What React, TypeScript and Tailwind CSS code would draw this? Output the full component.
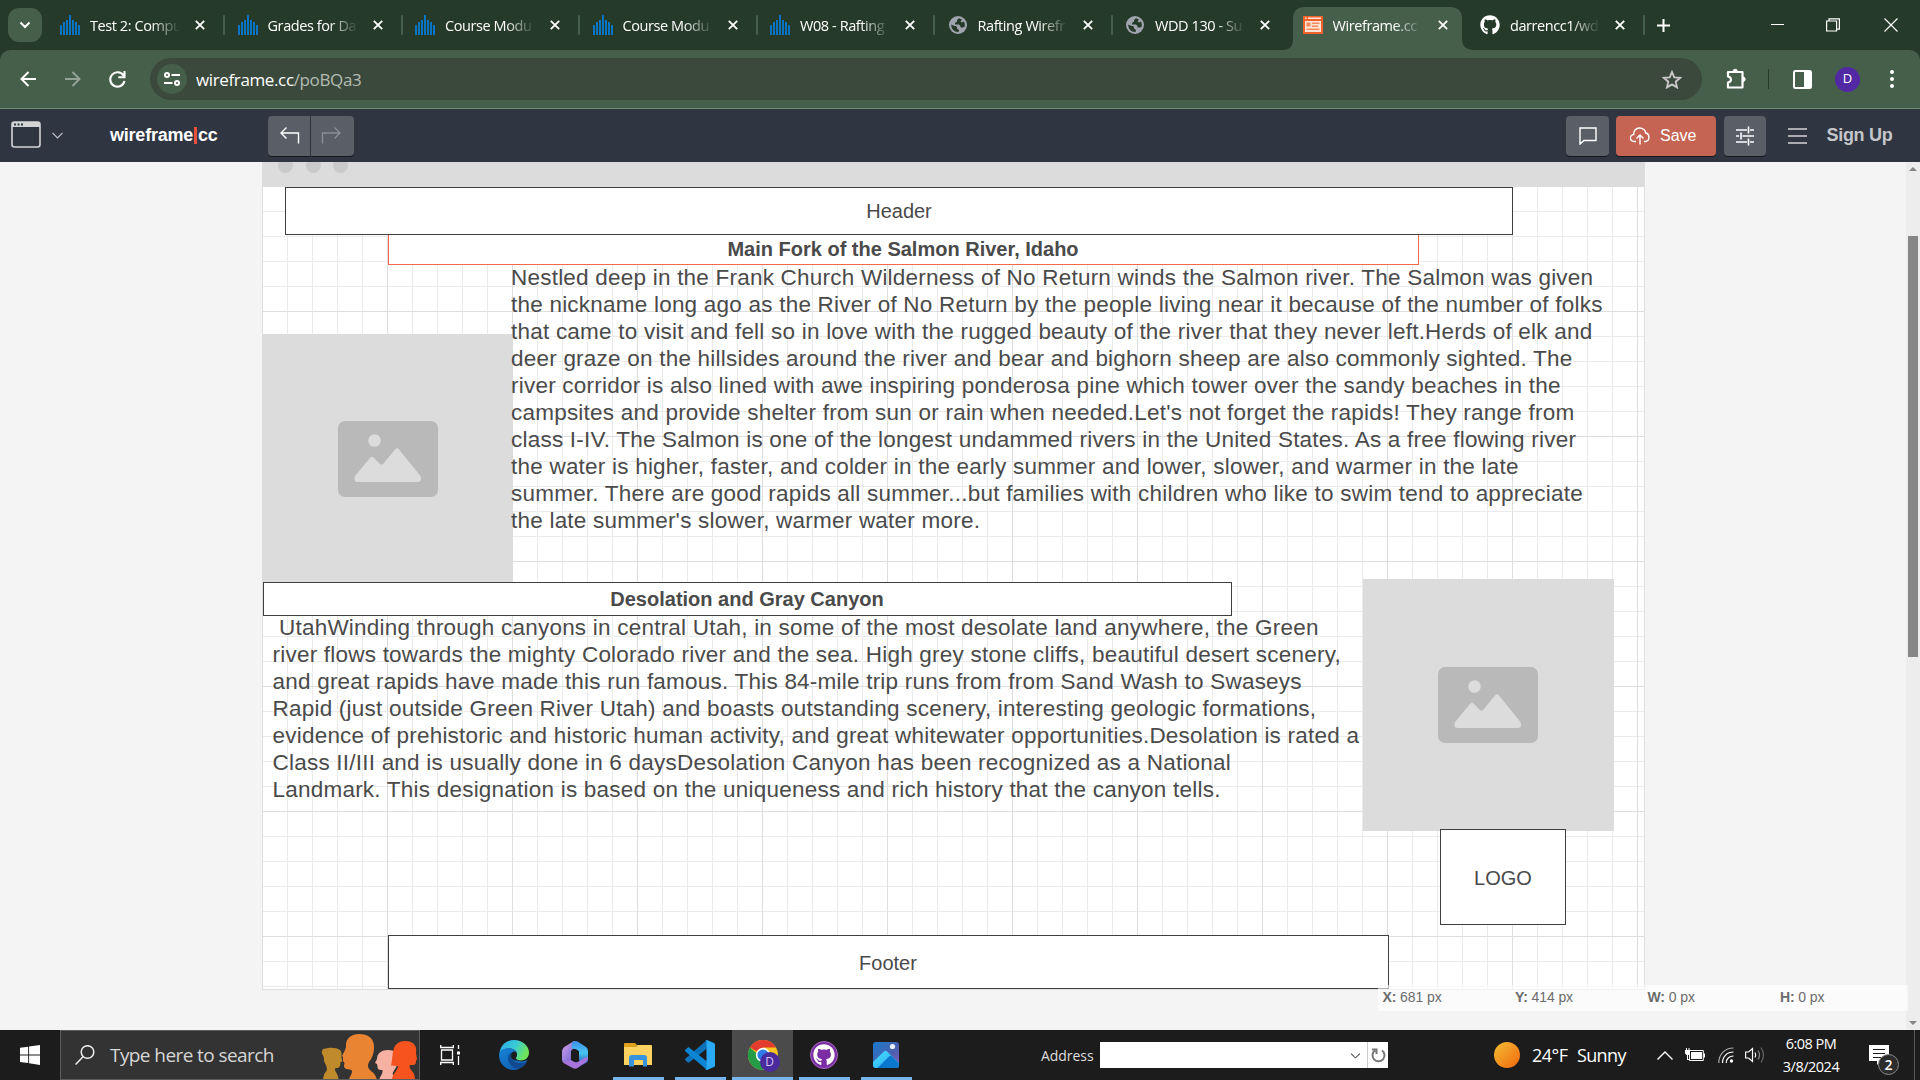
import React from "react";
import { VscChevronDown } from "react-icons/vsc";
import { FaGithub } from "react-icons/fa";

const UI = "font-['Open_Sans',sans-serif]";

const tabs = [
  { icon: "bars", title: "Test 2: Compu" },
  { icon: "bars", title: "Grades for Da" },
  { icon: "bars", title: "Course Modu" },
  { icon: "bars", title: "Course Modu" },
  { icon: "bars", title: "W08 - Rafting" },
  { icon: "globe", title: "Rafting Wirefr" },
  { icon: "globe", title: "WDD 130 - Su" },
  { icon: "wire", title: "Wireframe.cc" },
  { icon: "github", title: "darrencc1/wd" },
];

function Favicon({ kind }: { kind: string }) {
  if (kind === "bars")
    return (
      <svg width="20" height="20" viewBox="0 0 20 20" fill="#0a74c4">
        <path d="M0 10h2v10H0zM3 7h2v13H3zM6 5h2v15H6zM9 0h2v20H9zM12 5h2v15h-2zM15 7h2v13h-2zM18 10h2v10h-2z" />
      </svg>
    );
  if (kind === "globe")
    return (
      <svg width="20" height="20" viewBox="0 0 20 20">
        <circle cx="10" cy="10" r="9" fill="#9fa4ae" />
        <path d="M11 3.200 9 5v1.500L7 8v1.500h4l1.500 1.500v1.500h2l2-.5c.6-2 .3-4-.6-5.500L14 7.500l-1.500-1L14 4.500zM3.200 9.500l3.300 1.500 1.500 0 1 1.500v1l2 1.500-.5 2c-4 .3-7.500-3-7.300-7.500z" fill="#253a28" />
      </svg>
    );
  if (kind === "wire")
    return (
      <svg width="20" height="18" viewBox="0 0 20 18">
        <path d="M0 0h20v18H0z" fill="#f0622d" />
        <path d="M2 1.500h1.500v1.500H2zM5 1.500h13v1.500H5zM2 5h16v11H2z" fill="#ffe3d3" />
        <path d="M3.500 6.500h4v4h-4zM9 6.500h7.500V8H9zM9 9.500h6V11H9zM3.500 12.500h13V14h-13z" fill="#f58a5d" />
      </svg>
    );
  return <FaGithub size={20} color="#fff" />;
}

function X() {
  return (
    <svg width="10" height="10" viewBox="0 0 10 10" stroke="#fff" strokeWidth="1.800">
      <path d="M.8.8l8.400 8.400M9.200.8L.8 9.200" />
    </svg>
  );
}

function Tab({ icon, title, active, sep }: { icon: string; title: string; active: boolean; sep: boolean }) {
  return (
    <div className="relative flex h-[50px] w-[177.5px] shrink-0 items-center">
      {active && (
        <svg className="absolute -left-[20px] top-[7px]" width="191" height="43" viewBox="0 0 191 43">
          <path d="M0 43c7 0 10-4 10-11V12C10 4 14 0 22 0h145c8 0 12 4 12 12v20c0 7 4 11 12 11z" fill="#465f4a" />
        </svg>
      )}
      <div className="relative flex w-full items-center">
        <Favicon kind={icon} />
        <div className={`ml-[10px] w-[92px] overflow-hidden whitespace-nowrap pt-[1px] text-[14.5px] leading-5 tracking-[-0.42px] text-white [mask-image:linear-gradient(to_right,#000_66%,transparent_98%)] ${UI}`}>
          {title}
        </div>
        <div className="ml-[13px]">
          <X />
        </div>
        {sep && <div className="ml-[18px] h-5 w-[2px] rounded bg-[#465f4a]" />}
      </div>
    </div>
  );
}

function ChromeTabs() {
  return (
    <div className="flex h-[50px] items-center bg-[#253a28] pl-2">
      <div className="flex h-[34px] w-[34px] items-center justify-center rounded-[11px] bg-[#465f4a]">
        <svg width="12" height="8" viewBox="0 0 12 8" fill="none" stroke="#fff" strokeWidth="2">
          <path d="M1.500 1.500 6 6l4.500-4.500" />
        </svg>
      </div>
      <div className="ml-[18px] flex">
        {tabs.map((t, i) => (
          <Tab key={i} icon={t.icon} title={t.title} active={i === 7} sep={i !== 6 && i !== 7} />
        ))}
      </div>
      <svg className="-ml-px" width="13" height="13" viewBox="0 0 13 13" stroke="#fff" strokeWidth="2">
        <path d="M6.500 0v13M0 6.500h13" />
      </svg>
      <div className="ml-auto flex items-center pr-[22px]">
        <svg width="14" height="14" viewBox="0 0 14 14" stroke="#fff">
          <path d="M1 6.500h13" />
        </svg>
        <svg className="ml-[42px]" width="14" height="14" viewBox="0 0 14 14" fill="none" stroke="#fff" strokeWidth="1.200">
          <path d="M.6 3h10v10H.6zM3 3V.8h10.400v10.400H11" />
        </svg>
        <svg className="ml-[44px]" width="14" height="14" viewBox="0 0 14 14" stroke="#fff" strokeWidth="1.200">
          <path d="M.5.500l13 13M13.500.500l-13 13" />
        </svg>
      </div>
    </div>
  );
}

function AddressBar() {
  return (
    <div className="h-[59px] bg-[#253a28]">
      <div className="flex h-full items-center rounded-t-[10px] border-b border-[#6d8870] bg-[#465f4a] pl-5">
        <svg width="16" height="16" viewBox="0 0 16 16" fill="none" stroke="#fff" strokeWidth="2">
          <path d="M16 8H1.500M8.500 1 1.500 8l7 7" />
        </svg>
        <svg className="ml-[29px]" width="16" height="16" viewBox="0 0 16 16" fill="none" stroke="#93a295" strokeWidth="2">
          <path d="M0 8h14.500M7.500 1l7 7-7 7" />
        </svg>
        <svg className="ml-[28px]" width="17" height="17" viewBox="0 0 17 17" fill="none" stroke="#fff" strokeWidth="2.100">
          <path d="M14.500 4.500A7.200 7.200 0 1 0 15.500 10M15.500 0v6.200H9.300" />
        </svg>
        <div className="ml-6 flex h-[42px] w-[1552px] items-center rounded-full bg-[#3b493c] pl-[7px] pr-[20px]">
          <div className="flex h-[30px] w-[30px] items-center justify-center rounded-full bg-[#465f4a]">
            <svg width="16" height="14" viewBox="0 0 16 14" fill="none" stroke="#fff" strokeWidth="2">
              <circle cx="3" cy="3" r="2" />
              <path d="M7.500 3H16M0 11h8.500" />
              <circle cx="13" cy="11" r="2" />
            </svg>
          </div>
          <div className={`ml-[9px] pt-[2px] text-[17px] leading-6 tracking-[-0.37px] text-white ${UI}`}>
            wireframe.cc<span className="text-[#b3bcb4]">/poBQa3</span>
          </div>
          <svg className="ml-auto" width="20" height="19" viewBox="0 0 20 19" fill="none" stroke="#c9c6ca" strokeWidth="1.900">
            <path d="M10 2l2.300 5.400 5.700.5-4.300 3.800 1.300 5.700-5-3-5 3 1.300-5.700L2 7.900l5.700-.5z" />
          </svg>
        </div>
        <svg className="ml-[23px]" width="22" height="22" viewBox="0 0 22 22" fill="none" stroke="#fff" strokeWidth="2.200" strokeLinejoin="round">
          <path d="M3 4h14.500v15.500H3v-5c4-1 4-5 0-6z" />
          <path d="M8 3.500a2.200 2.200 0 0 1 4.400 0zM18 9a2.200 2.200 0 0 1 0 4.400z" fill="#fff" stroke="#fff" strokeWidth="1" />
        </svg>
        <div className="ml-[21px] h-5 w-px bg-[#253a28]" />
        <svg className="ml-[24px]" width="19" height="19" viewBox="0 0 19 19">
          <rect x="1" y="1" width="17" height="17" rx="1.500" fill="none" stroke="#fff" strokeWidth="2" />
          <path d="M11 1h7v17h-7z" fill="#fff" />
        </svg>
        <div className={`ml-[23px] flex h-[25px] w-[25px] items-center justify-center rounded-full bg-[#5229a5] text-[13px] text-white ${UI}`}>D</div>
        <svg className="ml-[30px]" width="4" height="18" viewBox="0 0 4 18" fill="#fff">
          <circle cx="2" cy="2" r="2" />
          <circle cx="2" cy="9" r="2" />
          <circle cx="2" cy="16" r="2" />
        </svg>
      </div>
    </div>
  );
}

function AppBar() {
  return (
    <div className="flex h-[53px] items-center bg-[#2f3541] pl-[11px] font-['Liberation_Sans',sans-serif]">
      <svg className="-mt-[2px]" width="30" height="27" viewBox="0 0 30 27">
        <rect x="1" y="1" width="28" height="25" rx="2.500" fill="none" stroke="#d3d4d6" strokeWidth="1.600" />
        <path d="M1 3q0-2 2-2h24q2 0 2 2v3H1z" fill="#d3d4d6" />
        <path d="M3 2.500h2v2H3zM6.500 2.500h2v2h-2zM10 2.500h2v2h-2z" fill="#2f3541" />
      </svg>
      <svg className="ml-[11px]" width="11" height="7" viewBox="0 0 11 7" fill="none" stroke="#c3c5c9" strokeWidth="1.200">
        <path d="M.5.800l5 5 5-5" />
      </svg>
      <div className="ml-[47px] flex w-[158px] items-center pb-[2px] text-[18px] font-bold leading-5 tracking-[-0.22px] text-white">
        wireframe<span className="ml-[1px] mr-[1px] mt-[2px] h-[17px] w-[3px] bg-[#e9503c]" />cc
      </div>
      <div className="flex gap-px">
        <div className="flex h-10 w-[42px] items-center justify-center rounded-l-[4px] bg-[#5a5e67] shadow-[0_1px_0_#15181d]">
          <svg className="ml-[2px]" width="20" height="17" viewBox="0 0 20 17" fill="none" stroke="#fff" strokeWidth="1.400">
            <path d="M6.500 0.500 1 6l5.500 5.500M1 6h17.500v10.500" />
          </svg>
        </div>
        <div className="flex h-10 w-[43px] items-center justify-center rounded-r-[4px] bg-[#5a5e67] shadow-[0_1px_0_#15181d]">
          <svg className="-ml-[4px]" width="20" height="17" viewBox="0 0 20 17" fill="none" stroke="#8b8e94" strokeWidth="1.400">
            <path d="M13.500 0.500 19 6l-5.500 5.500M19 6H1.500v10.500" />
          </svg>
        </div>
      </div>
      <div className="ml-auto flex items-center pr-[27px]">
        <div className="flex h-10 w-[43px] items-center justify-center rounded-[4px] bg-[#5a5e67] shadow-[0_1px_0_#15181d]">
          <svg width="18" height="18" viewBox="0 0 18 18" fill="none" stroke="#fff" strokeWidth="1.400">
            <path d="M1 1h16v12.500H5L1 17z" />
          </svg>
        </div>
        <div className="ml-[7px] flex h-10 w-[100px] items-center rounded-[4px] bg-[#c56453] pl-[14px] text-[16px] text-white shadow-[0_1px_0_#15181d]">
          <svg width="20" height="18" viewBox="0 0 20 18" fill="none" stroke="#fff" strokeWidth="1.400">
            <path d="M6 14.500H4a3.300 3.300 0 0 1-.3-7C3.500 3.500 6 1 9.500 1s6 2.500 6.200 5c4.300.8 4.300 8 0 8.500H14M10 17.500V8.500M6.500 11.500 10 8l3.500 3.500" />
          </svg>
          <span className="ml-[10px]">Save</span>
        </div>
        <div className="ml-2 flex h-10 w-[42px] items-center justify-center rounded-[4px] bg-[#5a5e67] shadow-[0_1px_0_#15181d]">
          <svg width="18" height="20" viewBox="0 0 18 20" fill="none" stroke="#fff" strokeWidth="1.600">
            <path d="M0 4h11M14 4h4M12.500 0.500v7M0 10h3M6.500 10H18M5 6.500v7M0 16h11M14 16h4M12.500 12.500v7" />
          </svg>
        </div>
        <svg className="ml-[22px]" width="19" height="16" viewBox="0 0 19 16" stroke="#d3d4d6" strokeWidth="1.600">
          <path d="M0 1h19M0 8h19M0 15h19" />
        </svg>
        <div className="ml-[19.5px] w-[66.5px] whitespace-nowrap text-[18px] font-bold tracking-[-0.3px] text-[#c5c6c9]">Sign Up</div>
      </div>
    </div>
  );
}

function Picture({ className }: { className: string }) {
  return (
    <div className={`absolute flex items-center justify-center bg-[#dcdcdc] ${className}`}>
      <svg width="100" height="76" viewBox="0 0 100 76">
        <rect width="100" height="76" rx="7" fill="#b9b9b9" />
        <g fill="#dcdcdc">
          <circle cx="36.500" cy="19.500" r="6.300" />
          <path d="M17 55 32 37q2-2.500 4 0l6 6q1.500 1 3 0L57 28.500q2-2.500 4 0L82.500 55q2 6-3 6H20q-5 0-3-6z" />
        </g>
      </svg>
    </div>
  );
}

const paragraph1 = [
  "Nestled deep in the Frank Church Wilderness of No Return winds the Salmon river. The Salmon was given",
  "the nickname long ago as the River of No Return by the people living near it because of the number of folks",
  "that came to visit and fell so in love with the rugged beauty of the river that they never left.Herds of elk and",
  "deer graze on the hillsides around the river and bear and bighorn sheep are also commonly sighted. The",
  "river corridor is also lined with awe inspiring ponderosa pine which tower over the sandy beaches in the",
  "campsites and provide shelter from sun or rain when needed.Let's not forget the rapids! They range from",
  "class I-IV. The Salmon is one of the longest undammed rivers in the United States. As a free flowing river",
  "the water is higher, faster, and colder in the early summer and lower, slower, and warmer in the late",
  "summer. There are good rapids all summer...but families with children who like to swim tend to appreciate",
  "the late summer's slower, warmer water more.",
];
const paragraph2 = [
  " UtahWinding through canyons in central Utah, in some of the most desolate land anywhere, the Green",
  "river flows towards the mighty Colorado river and the sea. High grey stone cliffs, beautiful desert scenery,",
  "and great rapids have made this run famous. This 84-mile trip runs from from Sand Wash to Swaseys",
  "Rapid (just outside Green River Utah) and boasts outstanding scenery, interesting geologic formations,",
  "evidence of prehistoric and historic human activity, and great whitewater opportunities.Desolation is rated a",
  "Class II/III and is usually done in 6 daysDesolation Canyon has been recognized as a National",
  "Landmark. This designation is based on the uniqueness and rich history that the canyon tells.",
];

function Lines({ lines, className }: { lines: string[]; className: string }) {
  return (
    <div className={`absolute whitespace-pre text-[22.5px] leading-[27px] tracking-[0.22px] ${className}`}>
      {lines.map((l) => (
        <div key={l}>{l}</div>
      ))}
    </div>
  );
}

const boxBase = "absolute flex items-center justify-center border border-[#3f3f3f] bg-white text-[20px]";

function Workspace() {
  return (
    <div className="relative flex h-[868px] overflow-hidden bg-[#f4f4f4] font-['Liberation_Sans',sans-serif] text-[#4a4a4a]">
      <div className="ml-[262px] h-[828px] w-[1383px] border-x border-b border-[#dedede] bg-white">
        <div className="flex h-[25px] gap-[12.5px] bg-[#dcdcdc] pl-[15px]">
          <div className="-mt-1 h-[15px] w-[15px] rounded-full bg-[#cacaca]" />
          <div className="-mt-1 h-[15px] w-[15px] rounded-full bg-[#cacaca]" />
          <div className="-mt-1 h-[15px] w-[15px] rounded-full bg-[#cacaca]" />
        </div>
        <div className="relative h-[802px] bg-[linear-gradient(to_right,transparent_124px,#dedede_124px),linear-gradient(to_bottom,transparent_124px,#dedede_124px),linear-gradient(to_right,transparent_24px,#ebebeb_24px),linear-gradient(to_bottom,transparent_24px,#ebebeb_24px)] bg-[size:125px_125px,125px_125px,25px_25px,25px_25px]">
          <div className="absolute left-[125px] top-[46px] flex h-[32px] w-[1031px] items-center justify-center border border-[#f4694b] bg-white pr-[1px] text-[20px] font-bold">
            Main Fork of the Salmon River, Idaho
          </div>
          <div className={`${boxBase} left-[22px] top-0 h-[48px] w-[1228px]`}>Header</div>
          <Picture className="-left-px top-[147px] h-[248px] w-[251px] pt-[1px]" />
          <Lines lines={paragraph1} className="left-[248px] top-[77px]" />
          <div className={`${boxBase} left-0 top-[395px] h-[34px] w-[969px] pr-[1px] font-bold`}>Desolation and Gray Canyon</div>
          <Lines lines={paragraph2} className="left-[9.5px] top-[427px]" />
          <Picture className="left-[1100px] top-[392px] h-[252px] w-[251px] pr-[1px]" />
          <div className={`${boxBase} left-[1177px] top-[642px] h-[96px] w-[126px] pt-[2px]`}>LOGO</div>
          <div className={`${boxBase} left-[125px] top-[748px] h-[54px] w-[1001px] pr-[1px] pt-[2px]`}>Footer</div>
        </div>
      </div>
      <div className="absolute left-[1378px] top-[823px] grid h-[26px] w-[530px] grid-cols-[132.5px_132.5px_132.5px_auto] items-center bg-white/60 pb-[2px] pl-[4.5px] text-[14px] tracking-[-0.1px] text-[#6c6c6c]">
        <div><b>X:</b> 681 px</div>
        <div><b>Y:</b> 414 px</div>
        <div><b>W:</b> 0 px</div>
        <div><b>H:</b> 0 px</div>
      </div>
      <div className="ml-auto flex w-[14px] flex-col items-center bg-[#ededed] py-[5px]">
        <svg width="8" height="4" viewBox="0 0 8 4" fill="#858585"><path d="M0 4l4-4 4 4z" /></svg>
        <div className="mt-[65px] h-[421px] w-[10px] bg-[#868686]" />
        <svg className="mt-auto" width="8" height="4" viewBox="0 0 8 4" fill="#858585"><path d="M0 0l4 4 4-4z" /></svg>
      </div>
    </div>
  );
}

function AppSlot({ children, width, line = true, active = false }: { children: React.ReactNode; width: string; line?: boolean; active?: boolean }) {
  return (
    <div className={`relative flex h-[50px] items-center justify-center ${width} ${active ? "bg-[#4b4b4b]" : ""}`}>
      {children}
      {line && <div className="absolute inset-x-0 bottom-0 h-[3px] bg-[#76b5ee]" />}
    </div>
  );
}

function Taskbar() {
  return (
    <div className={`flex h-[50px] items-center bg-[#1c1c1c] text-white ${UI}`}>
      <div className="flex w-[60px] justify-center">
        <svg width="20" height="20" viewBox="0 0 20 20" fill="#fff">
          <path d="M0 2.800 8.200 1.700v7.700H0zM9.100 1.500 20 0v9.400H9.100zM0 10.400h8.200v7.700L0 17zM9.100 10.400H20V20L9.100 18.300z" />
        </svg>
      </div>
      <div className="flex h-[50px] w-[360px] items-center overflow-hidden border border-[#5c5c5c] bg-[#333] pl-[14px]">
        <svg width="20" height="20" viewBox="0 0 20 20" fill="none" stroke="#eee" strokeWidth="1.500">
          <circle cx="12.500" cy="7" r="6.300" />
          <path d="M8 11.800.6 19.400" />
        </svg>
        <div className="ml-[15px] w-[211px] whitespace-nowrap text-[19px] tracking-[-0.58px] text-[#d6d6d6]">Type here to search</div>
        <svg className="mt-[2px] shrink-0" width="96" height="48" viewBox="0 0 96 48">
          <path d="M2 23.500C-.5 20 1 16 5 16.500 8 15 16 15.500 19 18c2 2 1.500 5 1.500 8l1 3.500-2 .5c0 4-1 6-4 6-2 0-2 2 0 5 1 2 2 4 2 7H2c.5-5 1.500-7 3.500-9C7 35 4 32 3 29c0-2 0-4-1-5.500z" fill="#bf8a2c" />
          <path d="M25 15C24 7 30 2 38 2c9 0 15 4 15 13 0 7-2 11-5 15-2 4-1 6 2 9 3 2 5 5 6 9H28c.5-4 3-5 3-9 0-3-8 0-8-5l.5-3-1.500-2v-4l-1-1 3-6z" fill="#e98432" />
          <path d="M56 27c0-6 5-9 11-9 8 0 10 4 10 10 0 8-7 12-5 15l2 5H58c1-4 4-6 3.500-10-4 .5-5-1-5-3.500l-.5-2.500-2-1z" fill="#f6b1a3" />
          <path d="M72 20c1-7 5-11 12-11 10 0 12 6 11 12l1 6-1 2c0 4-1 4-6 4-1 2 0 4 2 6 2 2 3 5 3 9H71c0-6 5-8 6-14l-7-.5c1-4 1-8 2-13.500z" fill="#f5541f" />
        </svg>
      </div>
      <svg className="ml-[20px]" width="20" height="20" viewBox="0 0 20 20" fill="none" stroke="#fff" strokeWidth="1.300">
        <path d="M1.500 5h11v10h-11zM.7 0v2.500h12.600V0M.7 20v-2.500h12.600V20M18.500 0v4M18.500 11v9" />
        <path d="M17 6.500h3v3h-3z" fill="#fff" stroke="none" />
      </svg>
      <svg className="ml-[39px]" width="30" height="30" viewBox="0 0 30 30">
        <defs>
          <linearGradient id="edgeTop" x1="0" x2="1" y2=".4">
            <stop stopColor="#2ba8e8" /><stop offset=".55" stopColor="#38cad7" /><stop offset="1" stopColor="#6fe45b" />
          </linearGradient>
          <linearGradient id="edgeLow" x1="0" x2=".8" y2="1">
            <stop stopColor="#1683d8" /><stop offset="1" stopColor="#105cae" />
          </linearGradient>
        </defs>
        <path d="M.5 13C1.500 5 7.500 0 15 0c8.500 0 15 6 15 12.500 0 5-3.500 8-8 8-3 0-5-1.200-5-2.500 0-.8 1-1.400 1-3.500C18 11 14.500 8.500 10.500 8.500 6 8.500 2 10 .5 13z" fill="url(#edgeTop)" />
        <path d="M0 15c0-4 4-6.700 9.500-6.700 5 0 8.500 2.700 8.500 6 0 2-1.300 2.700-1.300 3.900 0 1.700 2.600 3.100 6 3.100 2.300 0 4-.7 5-1.300.4-.2.8.2.5.6C26 25 21.500 30 15 30 6.500 30 0 23.500 0 15z" fill="url(#edgeLow)" />
        <path d="M9 18c0-3 2-5.500 4-6-1 1-1.500 3-1 5 1 3.500 5 6.500 11 6 2 0 4-.7 4.500-1-1 3-5 6.500-9 6.500-5 0-9.500-5-9.500-10.500z" fill="#124a92" />
        <path d="M12 16c0-3 1.500-4.500 3.200-4.500 1.800 0 2.800 1.500 2.800 3 0 2-1.300 2.700-1.300 3.900 0 1 .8 1.800 1.800 2.300C14 20.500 12 18.500 12 16z" fill="#1c1c1c" />
      </svg>
      <svg className="ml-[33px]" width="26" height="28" viewBox="0 0 26 28">
        <defs>
          <linearGradient id="officeLeft" x2="1" y2="1"><stop stopColor="#d7a1ee" /><stop offset="1" stopColor="#5058c8" /></linearGradient>
          <linearGradient id="officeRight" x2="0" y2="1"><stop stopColor="#3f8fe8" /><stop offset=".5" stopColor="#48c6f2" /><stop offset="1" stopColor="#2750b8" /></linearGradient>
        </defs>
        <path d="M12 0 3 5.500Q0 7.500 0 11v8q0 2 2 3l4 2 3-3V11q0-2 2-3l6-4z" fill="url(#officeLeft)" />
        <path d="M10 1.500Q13-1 16 .8L24 6q2 1.500 2 4v9q0 2-2 3l-4 2-3-5v-7.500q0-1.500-1.500-2.500L9.500 7z" fill="url(#officeRight)" />
        <path d="M1 21l8-2 3.500 2q1.500.5 3 0l8-4.500q2.500-1 2.500 1-.5 2.500-2.500 4l-8 5.500q-2.500 1.600-5 0l-8-4.500z" fill="#a774dc" />
        <path d="M9 10.500 13 8l4 2.500V17l-4 3-4-3z" fill="#1c1c1c" />
      </svg>
      <div className="ml-[25px] flex">
        <AppSlot width="w-[51px]">
          <svg className="-ml-[2px]" width="28" height="24" viewBox="0 0 28 24">
            <path d="M0 1q0-1 1-1h10l2 2-1 3H0z" fill="#dfa11d" />
            <path d="M0 4h12l1.500-2H27q1 0 1 1v19H0z" fill="#fdd261" />
            <path d="M5 23.500V15q0-3 3-3h12q3 0 3 3v8.500h-4V17h-9v6.500z" fill="#3693dc" />
          </svg>
        </AppSlot>
        <AppSlot width="ml-[11px] w-[51px]">
          <svg className="-ml-[1px]" width="30" height="30" viewBox="0 0 30 30">
            <path d="M22 0v8.500L3.500 23l-3-2.500q-1-1 0-2z" fill="#0b71b9" />
            <path d="M22 30v-8.500L3.500 7l-3 2.500q-1 1 0 2z" fill="#0c86d4" />
            <path d="M22 0l7 3q1 .5 1 1.500v21q0 1-1 1.500l-7 3q-1 .2-1.500-.5l1-1V1.500l-1-1z" fill="#2aa9f5" />
          </svg>
        </AppSlot>
        <AppSlot width="ml-[6px] w-[61px]" active>
          <div className="relative">
            <svg width="30" height="30" viewBox="0 0 30 30">
              <circle cx="15" cy="15" r="15" fill="#f9c620" />
              <path d="M15 15 2 7.500A15 15 0 0 1 28 7.500H15z" fill="#e33b2e" />
              <path d="M2 7.500A15 15 0 0 0 15 30l6.500-11.200H15z" fill="#269c48" />
              <circle cx="15" cy="15" r="7.200" fill="#fff" />
              <circle cx="15" cy="15" r="5.600" fill="#2f7ce8" />
            </svg>
            <div className="absolute -bottom-[2px] left-[12px] flex h-5 w-5 items-center justify-center rounded-full bg-[#4a2b9e] text-[12px] text-[#d0c4f0]">D</div>
          </div>
        </AppSlot>
        <AppSlot width="ml-[6px] w-[51px]">
          <div className="-ml-[2px] flex h-[28px] w-[28px] items-center justify-center overflow-hidden rounded-full border border-[#a868c4] bg-[#7b2ea3]">
            <FaGithub size={22} color="#fff" />
          </div>
        </AppSlot>
        <AppSlot width="ml-[11px] w-[51px]">
          <svg className="-ml-[2px]" width="26" height="26" viewBox="0 0 26 26">
            <defs>
              <linearGradient id="photo" x2="1" y2="1"><stop stopColor="#1a7ad0" /><stop offset=".6" stopColor="#4d5fae" /><stop offset="1" stopColor="#8a5ec0" /></linearGradient>
              <linearGradient id="hill" x2="1" y2="1"><stop stopColor="#4be0ff" /><stop offset="1" stopColor="#23a6ee" /></linearGradient>
            </defs>
            <rect width="26" height="26" rx="3" fill="url(#photo)" />
            <path d="M0 20 11 9.500q1.500-1.300 3 0L26 21v2q0 3-3 3H3q-3 0-3-3z" fill="url(#hill)" />
            <path d="M4.500 26 16 14.500q1.500-1.500 3 0l7 7V23q0 3-3 3z" fill="#0b78cf" />
            <circle cx="19.500" cy="4.500" r="2.600" fill="#eaf4ff" />
          </svg>
        </AppSlot>
      </div>
      <div className="ml-[129px] w-[59px] whitespace-nowrap text-[14px] tracking-[-0.05px] text-[#dedede]">Address</div>
      <div className="flex h-[26px] w-[288px] items-center justify-end bg-white">
        <VscChevronDown size={15} color="#333" />
        <div className="ml-[4px] flex h-full w-[21px] items-center justify-center border-l border-[#ccc]">
          <svg width="15" height="16" viewBox="0 0 15 16" fill="none" stroke="#777" strokeWidth="2">
            <path d="M11 3.500a6 6 0 1 1-7 0M1 2.500h4.500V7" />
          </svg>
        </div>
      </div>
      <div className="ml-[106px] h-[26px] w-[26px] rounded-full bg-linear-to-br from-[#f0bd33] to-[#f0640a]" />
      <div className="ml-[12px] w-[45px] whitespace-nowrap text-[18px] tracking-[-0.5px]">24°F</div>
      <div className="w-[80px] whitespace-nowrap text-[18px] tracking-[-0.65px]">Sunny</div>
      <svg width="16" height="9" viewBox="0 0 16 9" fill="none" stroke="#fff" strokeWidth="1.400">
        <path d="M.5 8.500 8 1l7.500 7.500" />
      </svg>
      <svg className="ml-[12px]" width="20" height="14" viewBox="0 0 20 14">
        <path d="M4.500 2.500h13.800v10H4.500z" fill="none" stroke="#fff" />
        <path d="M6 4h11v7H6zM18.500 5.500H20v4h-1.500zM0 2h5v3.500L3.500 7h-2L0 5.500zM1 0h1v2H1zM3.500 0h1v2h-1zM2 7h1v4h2v1H2z" fill="#fff" />
      </svg>
      <svg className="ml-[13px]" width="16" height="16" viewBox="0 0 16 16" fill="none" stroke="#fff" strokeWidth="1.200">
        <path d="M.8 16C.8 7 7 1 15.500 1" stroke="#aaa" />
        <path d="M4.500 16C4.500 9.500 9 5 15.500 5M8.200 16c0-4 3-7 7.300-7" />
        <circle cx="13.500" cy="14" r="1.700" fill="#fff" stroke="none" />
      </svg>
      <svg className="ml-[11px]" width="20" height="18" viewBox="0 0 20 18" fill="none" stroke="#fff" strokeWidth="1.200">
        <path d="M.6 6h3L7.500 2.500v13L3.600 12h-3zM10 6.500q1.500 2.500 0 5" />
        <path d="M13 4.500q3 4.500 0 9" stroke="#888" />
        <path d="M16 1.500q5 7.500 0 15" stroke="#666" />
      </svg>
      <div className="ml-[14px] w-[64px] text-center text-[14.500px] leading-[23px] tracking-[-0.5px]">
        <div className="whitespace-nowrap">6:08 PM</div>
        <div className="whitespace-nowrap">3/8/2024</div>
      </div>
      <div className="relative ml-[26px] h-[50px] w-[45px]">
        <svg className="absolute left-0 top-[15px]" width="20" height="20" viewBox="0 0 20 20">
          <path d="M0 0h20v16h-8l-4 4v-4H0z" fill="#fff" />
          <path d="M4 4.500h12M4 8.500h12M4 12.500h8" stroke="#1c1c1c" strokeWidth="1.200" />
        </svg>
        <div className="absolute left-[9px] top-[24px] flex h-[21px] w-[21px] items-center justify-center rounded-full border border-[#8a8a8a] bg-[#2c2c2c] text-[14px] font-semibold">2</div>
      </div>
      <div className="h-[50px] w-px bg-[#5a5a5a]" />
    </div>
  );
}

export default function App() {
  return (
    <div className="flex h-[1080px] w-[1920px] flex-col overflow-hidden">
      <ChromeTabs />
      <AddressBar />
      <AppBar />
      <Workspace />
      <Taskbar />
    </div>
  );
}
